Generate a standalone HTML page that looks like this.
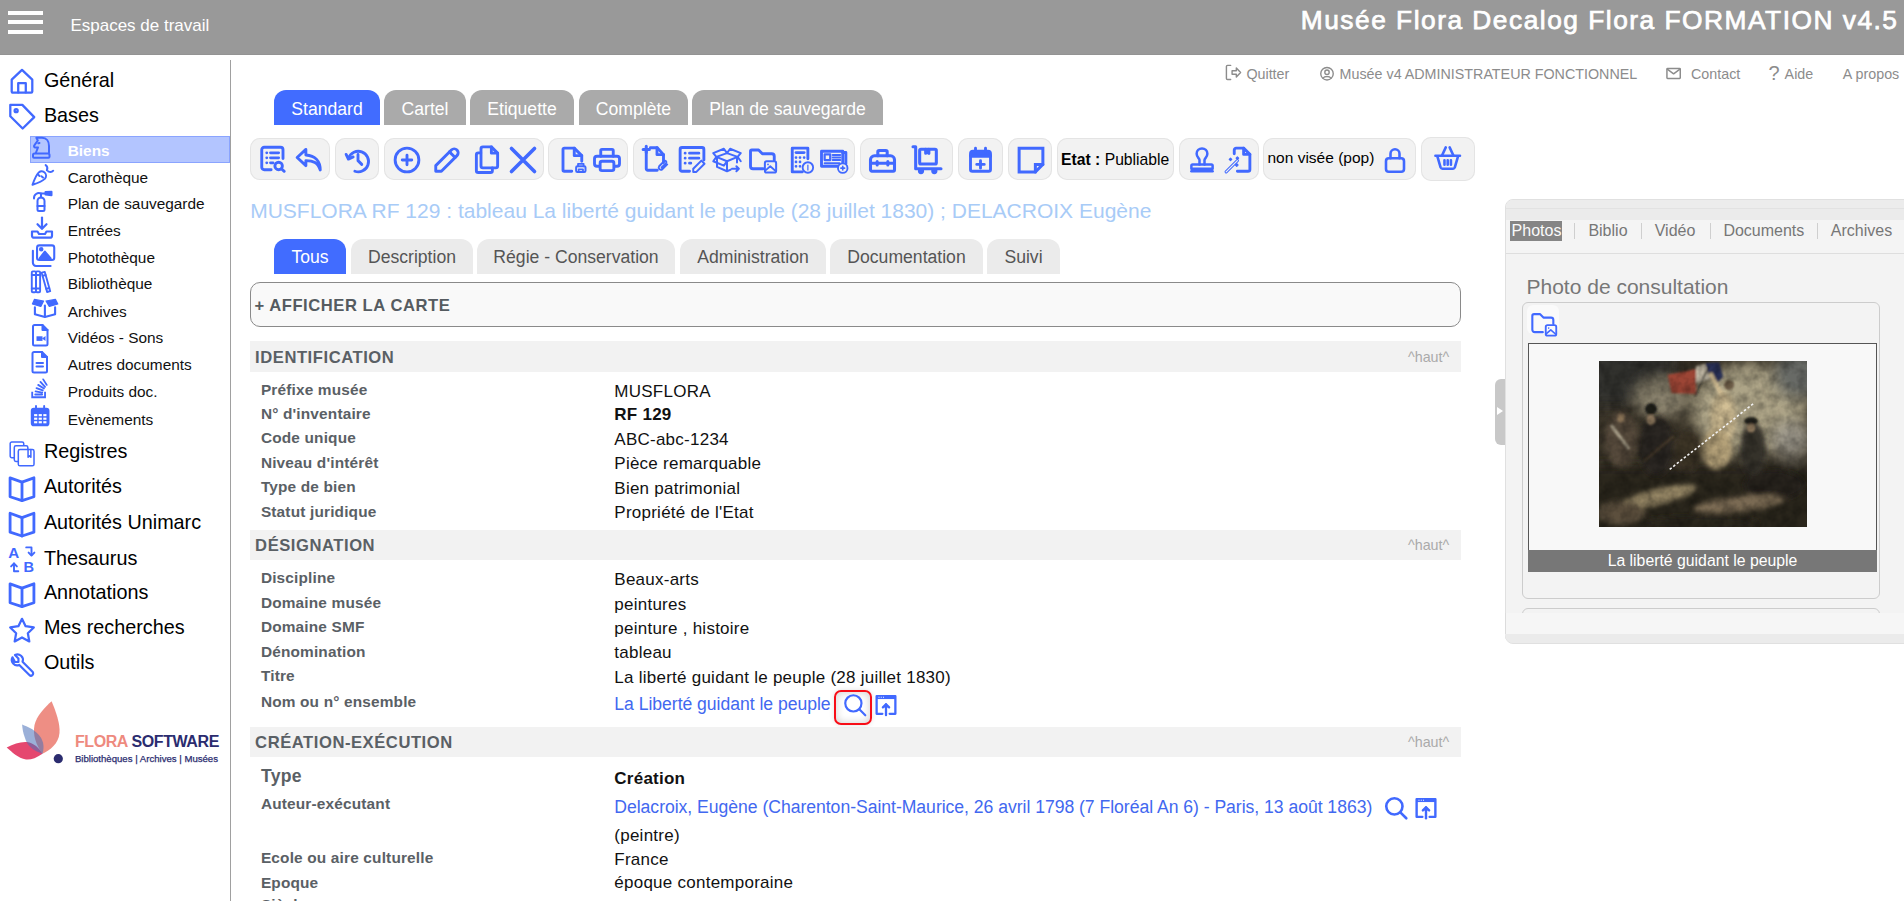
<!DOCTYPE html>
<html><head><meta charset="utf-8"><title>Flora</title>
<style>
html,body{margin:0;padding:0;width:1904px;height:901px;overflow:hidden;background:#fff;}
body{position:relative;font-family:"Liberation Sans",sans-serif;}
.t{position:absolute;line-height:1;white-space:nowrap;}
.i{position:absolute;overflow:visible;}
</style></head><body>
<div style="position:absolute;left:0px;top:0px;width:1904px;height:55px;background:#999999;box-shadow:inset 0 -1px 0 #939393"></div><div style="position:absolute;left:8px;top:10.5px;width:35px;height:4.3px;background:#fff"></div><div style="position:absolute;left:8px;top:20.2px;width:35px;height:4.3px;background:#fff"></div><div style="position:absolute;left:8px;top:30px;width:35px;height:4.3px;background:#fff"></div><div class="t" style="left:70.4px;top:17.0px;font-size:17px;color:#fff;font-weight:normal;">Espaces de travail</div><div class="t" style="right:5.5px;top:7.1px;font-size:26.3px;color:#fff;letter-spacing:1.51px;-webkit-text-stroke:0.75px #fff">Musée Flora Decalog Flora FORMATION v4.5</div><div style="position:absolute;left:230px;top:60px;width:1px;height:841px;background:#a0a0a0"></div><div class="t" style="left:43.9px;top:70.6px;font-size:19.8px;color:#000;font-weight:normal;">Général</div><div class="t" style="left:43.9px;top:106.0px;font-size:19.8px;color:#000;font-weight:normal;">Bases</div><div class="t" style="left:43.9px;top:442.3px;font-size:19.8px;color:#000;font-weight:normal;">Registres</div><div class="t" style="left:43.9px;top:477.1px;font-size:19.8px;color:#000;font-weight:normal;">Autorités</div><div class="t" style="left:43.9px;top:512.6px;font-size:19.8px;color:#000;font-weight:normal;">Autorités Unimarc</div><div class="t" style="left:43.9px;top:548.5px;font-size:19.8px;color:#000;font-weight:normal;">Thesaurus</div><div class="t" style="left:43.9px;top:583.2px;font-size:19.8px;color:#000;font-weight:normal;">Annotations</div><div class="t" style="left:43.9px;top:618.3px;font-size:19.8px;color:#000;font-weight:normal;">Mes recherches</div><div class="t" style="left:43.9px;top:653.0px;font-size:19.8px;color:#000;font-weight:normal;">Outils</div><div style="position:absolute;left:30px;top:136px;width:200px;height:27px;background:#b3c5ff;box-shadow:inset 0 0 0 1px #8aa4ff"></div><div class="t" style="left:67.7px;top:142.8px;font-size:15.4px;color:#fff;font-weight:bold;">Biens</div><div class="t" style="left:67.7px;top:170.3px;font-size:15.4px;color:#111;font-weight:normal;">Carothèque</div><div class="t" style="left:67.7px;top:196.1px;font-size:15.4px;color:#111;font-weight:normal;">Plan de sauvegarde</div><div class="t" style="left:67.7px;top:222.7px;font-size:15.4px;color:#111;font-weight:normal;">Entrées</div><div class="t" style="left:67.7px;top:249.5px;font-size:15.4px;color:#111;font-weight:normal;">Photothèque</div><div class="t" style="left:67.7px;top:276.1px;font-size:15.4px;color:#111;font-weight:normal;">Bibliothèque</div><div class="t" style="left:67.7px;top:303.6px;font-size:15.4px;color:#111;font-weight:normal;">Archives</div><div class="t" style="left:67.7px;top:330.2px;font-size:15.4px;color:#111;font-weight:normal;">Vidéos - Sons</div><div class="t" style="left:67.7px;top:357.4px;font-size:15.4px;color:#111;font-weight:normal;">Autres documents</div><div class="t" style="left:67.7px;top:384.3px;font-size:15.4px;color:#111;font-weight:normal;">Produits doc.</div><div class="t" style="left:67.7px;top:411.5px;font-size:15.4px;color:#111;font-weight:normal;">Evènements</div><div class="t" style="left:1246.4px;top:67.2px;font-size:14.3px;color:#8c8c8c;font-weight:normal;">Quitter</div><div class="t" style="left:1339.6px;top:67.2px;font-size:14.3px;color:#8c8c8c;font-weight:normal;">Musée v4 ADMINISTRATEUR FONCTIONNEL</div><div class="t" style="left:1691.0px;top:66.9px;font-size:14.3px;color:#8c8c8c;font-weight:normal;">Contact</div><div class="t" style="left:1784.6px;top:66.9px;font-size:14.3px;color:#8c8c8c;font-weight:normal;">Aide</div><div class="t" style="left:1842.8px;top:66.9px;font-size:14.3px;color:#8c8c8c;font-weight:normal;">A propos</div><div class="t" style="left:274px;top:90px;width:106px;height:35px;background:#416cff;border-radius:12px 12px 0 0;color:#fff;font-size:17.6px;text-align:center;line-height:35px;box-sizing:border-box;padding-top:1.5px">Standard</div><div class="t" style="left:384px;top:90px;width:82px;height:35px;background:#aaaaaa;border-radius:12px 12px 0 0;color:#fff;font-size:17.6px;text-align:center;line-height:35px;box-sizing:border-box;padding-top:1.5px">Cartel</div><div class="t" style="left:470px;top:90px;width:104px;height:35px;background:#aaaaaa;border-radius:12px 12px 0 0;color:#fff;font-size:17.6px;text-align:center;line-height:35px;box-sizing:border-box;padding-top:1.5px">Etiquette</div><div class="t" style="left:579px;top:90px;width:109px;height:35px;background:#aaaaaa;border-radius:12px 12px 0 0;color:#fff;font-size:17.6px;text-align:center;line-height:35px;box-sizing:border-box;padding-top:1.5px">Complète</div><div class="t" style="left:692px;top:90px;width:191px;height:35px;background:#aaaaaa;border-radius:12px 12px 0 0;color:#fff;font-size:17.6px;text-align:center;line-height:35px;box-sizing:border-box;padding-top:1.5px">Plan de sauvegarde</div><div style="position:absolute;left:250px;top:138px;width:80px;height:42px;background:#f2f2f2;border-radius:10px;box-shadow:inset 0 0 0 1px #e4e4e4"></div><div style="position:absolute;left:335px;top:138px;width:44px;height:42px;background:#f2f2f2;border-radius:10px;box-shadow:inset 0 0 0 1px #e4e4e4"></div><div style="position:absolute;left:384px;top:138px;width:160px;height:42px;background:#f2f2f2;border-radius:10px;box-shadow:inset 0 0 0 1px #e4e4e4"></div><div style="position:absolute;left:548px;top:138px;width:80px;height:42px;background:#f2f2f2;border-radius:10px;box-shadow:inset 0 0 0 1px #e4e4e4"></div><div style="position:absolute;left:633px;top:138px;width:222px;height:42px;background:#f2f2f2;border-radius:10px;box-shadow:inset 0 0 0 1px #e4e4e4"></div><div style="position:absolute;left:860px;top:138px;width:93px;height:42px;background:#f2f2f2;border-radius:10px;box-shadow:inset 0 0 0 1px #e4e4e4"></div><div style="position:absolute;left:958px;top:138px;width:45px;height:42px;background:#f2f2f2;border-radius:10px;box-shadow:inset 0 0 0 1px #e4e4e4"></div><div style="position:absolute;left:1008px;top:138px;width:44px;height:42px;background:#f2f2f2;border-radius:10px;box-shadow:inset 0 0 0 1px #e4e4e4"></div><div style="position:absolute;left:1057px;top:138px;width:117px;height:42px;background:#f2f2f2;border-radius:10px;box-shadow:inset 0 0 0 1px #e4e4e4"></div><div style="position:absolute;left:1179px;top:138px;width:80px;height:42px;background:#f2f2f2;border-radius:10px;box-shadow:inset 0 0 0 1px #e4e4e4"></div><div style="position:absolute;left:1263px;top:138px;width:153px;height:42px;background:#f2f2f2;border-radius:10px;box-shadow:inset 0 0 0 1px #e4e4e4"></div><div style="position:absolute;left:1421px;top:137px;width:54px;height:44px;background:#f2f2f2;border-radius:10px;box-shadow:inset 0 0 0 1px #e4e4e4"></div><div class="t" style="left:1061.1px;top:152.2px;font-size:15.7px;color:#000;font-weight:normal;"><b>Etat :</b> Publiable</div><div class="t" style="left:1267.5px;top:149.8px;font-size:15.5px;color:#000;font-weight:normal;">non visée (pop)</div><div class="t" style="left:250.2px;top:200.0px;font-size:21px;color:#a8cbf7;font-weight:normal;">MUSFLORA RF 129 : tableau La liberté guidant le peuple (28 juillet 1830) ; DELACROIX Eugène</div><div class="t" style="left:274px;top:239px;width:72px;height:35px;background:#416cff;border-radius:12px 12px 0 0;color:#fff;font-size:17.6px;text-align:center;line-height:35px;box-sizing:border-box;padding-top:0.8px">Tous</div><div class="t" style="left:351px;top:239px;width:122px;height:35px;background:#ebebeb;border-radius:12px 12px 0 0;color:#555;font-size:17.6px;text-align:center;line-height:35px;box-sizing:border-box;padding-top:0.8px">Description</div><div class="t" style="left:477px;top:239px;width:198px;height:35px;background:#ebebeb;border-radius:12px 12px 0 0;color:#555;font-size:17.6px;text-align:center;line-height:35px;box-sizing:border-box;padding-top:0.8px">Régie - Conservation</div><div class="t" style="left:680px;top:239px;width:146px;height:35px;background:#ebebeb;border-radius:12px 12px 0 0;color:#555;font-size:17.6px;text-align:center;line-height:35px;box-sizing:border-box;padding-top:0.8px">Administration</div><div class="t" style="left:830px;top:239px;width:153px;height:35px;background:#ebebeb;border-radius:12px 12px 0 0;color:#555;font-size:17.6px;text-align:center;line-height:35px;box-sizing:border-box;padding-top:0.8px">Documentation</div><div class="t" style="left:987px;top:239px;width:73px;height:35px;background:#ebebeb;border-radius:12px 12px 0 0;color:#555;font-size:17.6px;text-align:center;line-height:35px;box-sizing:border-box;padding-top:0.8px">Suivi</div><div style="position:absolute;left:250px;top:282px;width:1209px;height:43px;border:1px solid #8a8a8a;border-radius:10px;background:#f9f9f9"></div><div class="t" style="left:254.4px;top:298.1px;font-size:16.6px;color:#555b60;font-weight:bold;letter-spacing:0.55px">+ AFFICHER LA CARTE</div><div style="position:absolute;left:250px;top:341px;width:1211px;height:31px;background:#f2f2f2"></div><div class="t" style="left:255.1px;top:350.2px;font-size:16.6px;color:#5a6065;font-weight:bold;letter-spacing:0.55px">IDENTIFICATION</div><div class="t" style="left:1408.0px;top:349.7px;font-size:14.3px;color:#aaa;font-weight:normal;">^haut^</div><div class="t" style="left:260.9px;top:381.6px;font-size:15.4px;color:#5a6065;font-weight:bold;letter-spacing:0.17px">Préfixe musée</div><div class="t" style="left:614.3px;top:382.9px;font-size:17px;color:#111;font-weight:normal;letter-spacing:0.25px">MUSFLORA</div><div class="t" style="left:260.9px;top:406.0px;font-size:15.4px;color:#5a6065;font-weight:bold;letter-spacing:0.17px">N° d'inventaire</div><div class="t" style="left:614.3px;top:406.4px;font-size:17px;color:#111;font-weight:bold;letter-spacing:0.25px">RF 129</div><div class="t" style="left:260.9px;top:430.0px;font-size:15.4px;color:#5a6065;font-weight:bold;letter-spacing:0.17px">Code unique</div><div class="t" style="left:614.3px;top:430.9px;font-size:17px;color:#111;font-weight:normal;letter-spacing:0.25px">ABC-abc-1234</div><div class="t" style="left:260.9px;top:454.5px;font-size:15.4px;color:#5a6065;font-weight:bold;letter-spacing:0.17px">Niveau d'intérêt</div><div class="t" style="left:614.3px;top:455.1px;font-size:17px;color:#111;font-weight:normal;letter-spacing:0.25px">Pièce remarquable</div><div class="t" style="left:260.9px;top:479.0px;font-size:15.4px;color:#5a6065;font-weight:bold;letter-spacing:0.17px">Type de bien</div><div class="t" style="left:614.3px;top:480.0px;font-size:17px;color:#111;font-weight:normal;letter-spacing:0.25px">Bien patrimonial</div><div class="t" style="left:260.9px;top:503.5px;font-size:15.4px;color:#5a6065;font-weight:bold;letter-spacing:0.17px">Statut juridique</div><div class="t" style="left:614.3px;top:504.2px;font-size:17px;color:#111;font-weight:normal;letter-spacing:0.25px">Propriété de l'Etat</div><div style="position:absolute;left:250px;top:530px;width:1211px;height:30px;background:#f2f2f2"></div><div class="t" style="left:255.1px;top:538.2px;font-size:16.6px;color:#5a6065;font-weight:bold;letter-spacing:0.55px">DÉSIGNATION</div><div class="t" style="left:1408.0px;top:537.7px;font-size:14.3px;color:#aaa;font-weight:normal;">^haut^</div><div class="t" style="left:260.9px;top:570.4px;font-size:15.4px;color:#5a6065;font-weight:bold;letter-spacing:0.17px">Discipline</div><div class="t" style="left:614.3px;top:571.4px;font-size:17px;color:#111;font-weight:normal;letter-spacing:0.25px">Beaux-arts</div><div class="t" style="left:260.9px;top:595.0px;font-size:15.4px;color:#5a6065;font-weight:bold;letter-spacing:0.17px">Domaine musée</div><div class="t" style="left:614.3px;top:596.0px;font-size:17px;color:#111;font-weight:normal;letter-spacing:0.25px">peintures</div><div class="t" style="left:260.9px;top:619.0px;font-size:15.4px;color:#5a6065;font-weight:bold;letter-spacing:0.17px">Domaine SMF</div><div class="t" style="left:614.3px;top:619.8px;font-size:17px;color:#111;font-weight:normal;letter-spacing:0.25px">peinture , histoire</div><div class="t" style="left:260.9px;top:643.5px;font-size:15.4px;color:#5a6065;font-weight:bold;letter-spacing:0.17px">Dénomination</div><div class="t" style="left:614.3px;top:644.4px;font-size:17px;color:#111;font-weight:normal;letter-spacing:0.25px">tableau</div><div class="t" style="left:260.9px;top:668.0px;font-size:15.4px;color:#5a6065;font-weight:bold;letter-spacing:0.17px">Titre</div><div class="t" style="left:614.3px;top:668.6px;font-size:17px;color:#111;font-weight:normal;letter-spacing:0.25px">La liberté guidant le peuple (28 juillet 1830)</div><div class="t" style="left:260.9px;top:693.7px;font-size:15.4px;color:#5a6065;font-weight:bold;letter-spacing:0.17px">Nom ou n° ensemble</div><div class="t" style="left:614.3px;top:695.8px;font-size:17.6px;color:#4268f0;font-weight:normal;letter-spacing:-0.03px">La Liberté guidant le peuple</div><div style="position:absolute;left:250px;top:727px;width:1211px;height:30px;background:#f2f2f2"></div><div class="t" style="left:255.1px;top:735.4px;font-size:16.6px;color:#5a6065;font-weight:bold;letter-spacing:0.55px">CRÉATION-EXÉCUTION</div><div class="t" style="left:1408.0px;top:734.9px;font-size:14.3px;color:#aaa;font-weight:normal;">^haut^</div><div class="t" style="left:260.9px;top:768.1px;font-size:17.6px;color:#5a6065;font-weight:bold;letter-spacing:0.3px">Type</div><div class="t" style="left:260.9px;top:770.0px;font-size:15.4px;color:#5a6065;font-weight:bold;letter-spacing:0.17px"></div><div class="t" style="left:614.3px;top:769.8px;font-size:17px;color:#111;font-weight:bold;letter-spacing:0.25px">Création</div><div class="t" style="left:260.9px;top:795.9px;font-size:15.4px;color:#5a6065;font-weight:bold;letter-spacing:0.17px">Auteur-exécutant</div><div class="t" style="left:614.3px;top:798.5px;font-size:17.6px;color:#4268f0;font-weight:normal;letter-spacing:-0.03px">Delacroix, Eugène (Charenton-Saint-Maurice, 26 avril 1798 (7 Floréal An 6) - Paris, 13 août 1863)</div><div class="t" style="left:614.3px;top:826.7px;font-size:17px;color:#111;font-weight:normal;letter-spacing:0.25px">(peintre)</div><div class="t" style="left:260.9px;top:849.6px;font-size:15.4px;color:#5a6065;font-weight:bold;letter-spacing:0.17px">Ecole ou aire culturelle</div><div class="t" style="left:614.3px;top:850.5px;font-size:17px;color:#111;font-weight:normal;letter-spacing:0.25px">France</div><div class="t" style="left:260.9px;top:874.5px;font-size:15.4px;color:#5a6065;font-weight:bold;letter-spacing:0.17px">Epoque</div><div class="t" style="left:614.3px;top:874.3px;font-size:17px;color:#111;font-weight:normal;letter-spacing:0.25px">époque contemporaine</div><div class="t" style="left:260.9px;top:897.0px;font-size:15.4px;color:#5a6065;font-weight:bold;letter-spacing:0.17px">Siècle</div><div style="position:absolute;left:1505px;top:199px;width:420px;height:443px;border:1px solid #e0e0e0;border-radius:8px;background:#f3f3f3;overflow:hidden"><div style="position:absolute;left:0;top:0;width:100%;height:8px;background:#ececec;border-bottom:1px solid #e2e2e2"></div><div style="position:absolute;left:0;top:9px;width:100%;height:11px;background:#ebebeb"></div><div style="position:absolute;left:0;top:20px;width:100%;height:33px;background:#f4f4f4;border-bottom:1px solid #dedede"></div><div style="position:absolute;left:0;top:413px;width:100%;height:21px;background:#f6f6f6;border-top:1px solid #e0e0e0"></div><div style="position:absolute;left:0;top:435px;width:100%;height:10px;background:#ebebeb"></div></div><div style="position:absolute;left:1510px;top:221px;width:52px;height:20px;background:#858585"></div><div class="t" style="left:1511.6px;top:222.5px;font-size:16px;color:#fafafa;font-weight:normal;">Photos</div><div style="position:absolute;left:1574px;top:223px;width:1px;height:16px;background:#cfcfcf"></div><div style="position:absolute;left:1641px;top:223px;width:1px;height:16px;background:#cfcfcf"></div><div style="position:absolute;left:1710px;top:223px;width:1px;height:16px;background:#cfcfcf"></div><div style="position:absolute;left:1817px;top:223px;width:1px;height:16px;background:#cfcfcf"></div><div class="t" style="left:1588.4px;top:222.5px;font-size:16px;color:#777;font-weight:normal;">Biblio</div><div class="t" style="left:1654.7px;top:222.5px;font-size:16px;color:#777;font-weight:normal;">Vidéo</div><div class="t" style="left:1723.4px;top:222.5px;font-size:16px;color:#777;font-weight:normal;">Documents</div><div class="t" style="left:1830.8px;top:222.5px;font-size:16px;color:#777;font-weight:normal;">Archives</div><div class="t" style="left:1526.5px;top:276.2px;font-size:21px;color:#777;font-weight:normal;">Photo de consultation</div><div style="position:absolute;left:1522px;top:302px;width:356px;height:295px;border:1px solid #cccccc;border-radius:6px;background:#f3f3f3"></div><div style="position:absolute;left:1522px;top:608px;width:356px;height:20px;border:1px solid #cccccc;border-radius:6px;background:#f3f3f3"></div><div style="position:absolute;left:1505px;top:613px;width:399px;height:30px;background:#f6f6f6;border-radius:0 0 0 8px;border-left:1px solid #dcdcdc;border-bottom:1px solid #dcdcdc;box-sizing:border-box"></div><div style="position:absolute;left:1505px;top:634px;width:399px;height:9px;background:#ebebeb;border-radius:0 0 0 8px"></div><div style="position:absolute;left:1527px;top:305px;width:32px;height:29px;background:#fafafa;border-radius:6px"></div><div style="position:absolute;left:1528px;top:343px;width:347px;height:227px;border:1px solid #555;background:#f8f8f8"></div><div style="position:absolute;left:1528px;top:550px;width:349px;height:22px;background:#777"></div><div class="t" style="left:1528px;top:550px;width:349px;height:22px;line-height:22px;text-align:center;color:#fff;font-size:15.8px">La liberté guidant le peuple</div><div style="position:absolute;left:1599px;top:361px;width:208px;height:166px;background:#4a4536"></div><div style="position:absolute;left:1495px;top:379px;width:10px;height:66px;background:#c8c8c8;border-radius:6px 0 0 6px"></div><div style="position:absolute;left:1497px;top:407px;width:0;height:0;border-left:6px solid #fff;border-top:4.5px solid transparent;border-bottom:4.5px solid transparent"></div><div style="position:absolute;left:834px;top:690px;width:34px;height:31px;border:2px solid #f80d17;border-radius:7px;box-shadow:0 0 5px rgba(0,0,0,0.12),inset 0 0 8px rgba(0,0,0,0.2)"></div><svg style="position:absolute;left:0;top:690px" width="70" height="80" viewBox="0 690 70 80"><path d="M51.6 701.2C56 712 60.2 723 59.5 733C58.5 744 50 750 42.5 753.7C36 745 32.5 735 34.5 725C36.5 716 45 707 51.6 701.2Z" fill="#ee8e84"/><path d="M6.7 747.5C14 744 20 741.5 27 742C34 743 39 748 42.5 753.7C36 758 31 760 26 759.5C18 758 12 752 6.7 747.5Z" fill="#e5476f"/><path d="M22.1 724.6C28 727 33 729 38 734C43 739 45 746 42.5 753.7C34 751 27 746 25 738C23 733 22.5 729 22.1 724.6Z" fill="rgb(73,111,184)" fill-opacity="0.55"/><circle cx="58.3" cy="758.7" r="4.6" fill="#2b2c6f"/></svg><div class="t" style="left:74.9px;top:733.6px;font-size:16px;color:#2b2c6f;font-weight:bold;letter-spacing:-0.4px"><span style="color:#ee8a7e">FLORA</span> SOFTWARE</div><div class="t" style="left:74.9px;top:753.5px;font-size:9.6px;color:#2b2c6f;font-weight:normal;-webkit-text-stroke:0.25px #2b2c6f">Bibliothèques | Archives | Musées</div><svg style="position:absolute;left:1599px;top:361px" width="208" height="166" viewBox="0 0 208 166"><defs><filter id="bl" x="-30%" y="-30%" width="160%" height="160%"><feGaussianBlur stdDeviation="7"/></filter><filter id="bm" x="-30%" y="-30%" width="160%" height="160%"><feGaussianBlur stdDeviation="2.6"/></filter><filter id="bs" x="-30%" y="-30%" width="160%" height="160%"><feGaussianBlur stdDeviation="0.8"/></filter><filter id="tx" x="0" y="0" width="100%" height="100%"><feTurbulence type="fractalNoise" baseFrequency="0.09" numOctaves="3" seed="7"/><feColorMatrix type="matrix" values="0 0 0 0 0  0 0 0 0 0  0 0 0 0 0  0 0 0 -1.6 1.1"/></filter><clipPath id="pc"><rect width="208" height="166"/></clipPath></defs><g clip-path="url(#pc)"><rect width="208" height="166" fill="#3b3529"/><g filter="url(#bl)"><rect x="-10" y="-10" width="85" height="55" fill="#30322f"/><ellipse cx="62" cy="38" rx="26" ry="20" fill="#8d8570"/><ellipse cx="150" cy="48" rx="58" ry="46" fill="#ada487"/><ellipse cx="198" cy="14" rx="24" ry="24" fill="#686b66"/><ellipse cx="192" cy="78" rx="20" ry="18" fill="#9c978a"/><rect x="-10" y="104" width="230" height="80" fill="#2c271f"/></g><g filter="url(#bm)"><ellipse cx="22" cy="78" rx="17" ry="28" fill="#55493a"/><ellipse cx="57" cy="85" rx="18" ry="30" fill="#2a2620"/><ellipse cx="88" cy="90" rx="14" ry="20" fill="#3d3428"/><ellipse cx="124" cy="58" rx="13" ry="28" fill="#d2bf95"/><ellipse cx="118" cy="88" rx="15" ry="20" fill="#b3a078"/><ellipse cx="154" cy="88" rx="13" ry="26" fill="#35322c"/><ellipse cx="175" cy="124" rx="30" ry="15" fill="#28241e"/><ellipse cx="58" cy="136" rx="40" ry="8" fill="#9a8a68" transform="rotate(-14 58 136)"/><ellipse cx="140" cy="143" rx="46" ry="8" fill="#7a6b52" transform="rotate(-6 140 143)"/><ellipse cx="22" cy="152" rx="24" ry="12" fill="#5c503d"/><ellipse cx="100" cy="162" rx="60" ry="7" fill="#2b261f"/></g><g filter="url(#bs)"><path d="M68.7 13.8L97.4 8 96.5 32.8 72.6 31.9z" fill="#9c4535"/><path d="M97 5L106 3 111 18 97 22z" fill="#c9c0ac"/><path d="M106 2.3L120 1.3 124 15.7 118.4 21.4 111 17.6z" fill="#2b325a"/><path d="M96 35L110 5" stroke="#1e1c18" stroke-width="1.3"/><path d="M111 12L125 38" stroke="#cdb990" stroke-width="4.5"/><ellipse cx="130" cy="24" rx="5" ry="5" fill="#6a5a44"/><ellipse cx="52" cy="48" rx="6" ry="6" fill="#1b1a18"/><ellipse cx="52" cy="59" rx="4.5" ry="5" fill="#9a8366"/><ellipse cx="152" cy="60" rx="7" ry="4" fill="#24231f"/><ellipse cx="152" cy="67" rx="4" ry="4.5" fill="#9c8466"/><ellipse cx="22" cy="57" rx="4" ry="4.5" fill="#8c7458"/><path d="M12 64L30 88" stroke="#aea48e" stroke-width="3"/><path d="M45 100L75 75" stroke="#4a3c2c" stroke-width="2"/></g><rect width="208" height="166" fill="#1a1610" filter="url(#tx)" opacity="0.35"/><path d="M70.7 108.3L154.7 42.4" stroke="#f2f2f2" stroke-width="1.6" stroke-dasharray="2.5 2"/></g></svg><div class="t" style="left:8.3px;top:544.8px;font-size:15.2px;color:#4169ff;font-weight:bold;">A</div><div class="t" style="left:23.5px;top:559.8px;font-size:14.6px;color:#4169ff;font-weight:bold;">B</div><svg style="position:absolute;left:0;top:0;pointer-events:none" width="1904" height="901" viewBox="0 0 1904 901"><g transform="translate(9.00,68.60) scale(1.0833)" fill="none" stroke="#4169ff" stroke-width="2.1" stroke-linecap="round" stroke-linejoin="round"><path d="M2.5 10.2L12 1.2l9.5 9V21.2a1 1 0 0 1-1 1H3.5a1 1 0 0 1-1-1z"/><path d="M8.5 22V13.5h7V22"/></g><g transform="translate(9.00,103.60) scale(1.0833)" fill="none" stroke="#4169ff" stroke-width="2.1" stroke-linecap="round" stroke-linejoin="round"><path d="M1.2 1.2H12.3L23.3 12.5 12.6 23 1.2 11.7z"/><circle cx="6.6" cy="6.5" r="1.4"/></g><g transform="translate(9.10,440.90) scale(1.0833)" fill="none" stroke="#4169ff" stroke-width="1.4" stroke-linecap="round" stroke-linejoin="round"><rect x="1" y="1" width="12.5" height="14.5" rx="1.5"/><rect x="4.8" y="4.5" width="12.5" height="14.5" rx="1.5" fill="#fff"/><rect x="8.5" y="8" width="14.5" height="15" rx="1.5" fill="#fff"/><path d="M17.5 8v7l1.3-1.2 1.3 1.2V8"/></g><g transform="translate(9.00,476.20) scale(1.0833)" fill="none" stroke="#4169ff" stroke-width="2.6" stroke-linecap="round" stroke-linejoin="round"><path d="M1 1.5L12 5.5 23 1.5V19L12 22.5 1 19z"/><path d="M12 5.5V22.5"/></g><g transform="translate(9.00,511.60) scale(1.0833)" fill="none" stroke="#4169ff" stroke-width="2.6" stroke-linecap="round" stroke-linejoin="round"><path d="M1 1.5L12 5.5 23 1.5V19L12 22.5 1 19z"/><path d="M12 5.5V22.5"/></g><g transform="translate(9.00,582.20) scale(1.0833)" fill="none" stroke="#4169ff" stroke-width="2.6" stroke-linecap="round" stroke-linejoin="round"><path d="M1 1.5L12 5.5 23 1.5V19L12 22.5 1 19z"/><path d="M12 5.5V22.5"/></g><g fill="none" stroke="#4169ff" stroke-width="1.9" stroke-linecap="round" stroke-linejoin="round"><path d="M26.2 547.4H31.5V555"/><path d="M28.6 552.6l2.9 2.9 2.9-2.9"/><path d="M18.3 571.3H14V563.5"/><path d="M11.1 566.4l2.9-2.9 2.9 2.9"/></g><g transform="translate(8.50,617.00) scale(1.1250)" fill="none" stroke="#4169ff" stroke-width="2.0" stroke-linecap="round" stroke-linejoin="round"><path d="M12 18.2l-6.5 3.5 1.3-7.3L1.5 9.3l7.3-1.1L12 1.6l3.2 6.6 7.3 1.1-5.3 5.1 1.3 7.3z"/></g><g transform="translate(9.00,652.00) scale(1.0833)" fill="none" stroke="#4169ff" stroke-width="2.0" stroke-linecap="round" stroke-linejoin="round"><path d="M5.5 9.2h3.2V6L5.5 2.8a5 5 0 0 1 7 6.2l9.2 9.3a2 2 0 0 1-2.9 2.9L9.5 11.9a5 5 0 0 1-6.3-7z"/></g><g transform="translate(29.50,136.00) scale(1.0000)" fill="none" stroke="#4169ff" stroke-width="2.0" stroke-linecap="round" stroke-linejoin="round"><path d="M6.5 16.5L8.5 11.5H5.8a1.3 1.3 0 0 1-1-2.1L8.3 4.5 6.8 1.8H12.5c4.5 0 7 3.3 7 8.2v6.5"/><path d="M5.5 17.5h13a1.5 1.5 0 0 1 1.5 1.5v1.8a1 1 0 0 1-1 1H4.5a1 1 0 0 1-1-1V19a1.5 1.5 0 0 1 1.5-1.5z"/><path d="M8.8 7.3l1.2-.3"/></g><g transform="translate(30.00,163.00) scale(1.0000)" fill="none" stroke="#4169ff" stroke-width="2.0" stroke-linecap="round" stroke-linejoin="round"><path d="M2.5 21.8s9.5-3.2 12.5-6.2a4.4 4.4 0 0 0-6.2-6.2C5.8 12.3 2.5 21.8 2.5 21.8z"/><path d="M9.5 13l-1.5-1.5"/><path d="M13 14.5l-1.6-1.3"/><path d="M15.6 2c1.6 1.2 2.1 3.4 1.3 5.3"/><path d="M18.2 8.4c1.8 .9 3.8 .8 5-.7"/></g><g transform="translate(30.00,189.50) scale(1.0000)" fill="none" stroke="#4169ff" stroke-width="2.0" stroke-linecap="round" stroke-linejoin="round"><path d="M11 8a3.5 3.5 0 0 1 3.5 3.5V20a1.5 1.5 0 0 1-1.5 1.5H9A1.5 1.5 0 0 1 7.5 20V11.5A3.5 3.5 0 0 1 11 8z"/><path d="M7.5 16.5h7"/><path d="M11 8V4"/><path d="M4 9a5 5 0 0 1 7-5h5" /><path d="M15.5 2.5l6 -.3v3.6l-6-.8z" fill="#4169ff"/></g><g transform="translate(30.00,216.00) scale(1.0000)" fill="none" stroke="#4169ff" stroke-width="2.2" stroke-linecap="round" stroke-linejoin="round"><path d="M12 1.5V12.5"/><path d="M7.5 8.2L12 12.7l4.5-4.5"/><path d="M2 15.5h5.5l1.5 2.5h6l1.5-2.5H22v4.2a2 2 0 0 1-2 2H4a2 2 0 0 1-2-2z"/></g><g transform="translate(30.80,244.30) scale(1.0417)" fill="none" stroke="#4169ff" stroke-width="2.0" stroke-linecap="round" stroke-linejoin="round"><rect x="6" y="1" width="16.5" height="14" rx="2.2"/><path d="M2 6.2V17.8a3 3 0 0 0 3 3H19"/><path d="M8.5 13.5l5-6.5 5.5 6.5z" fill="#4169ff"/><circle cx="10" cy="4.8" r="1.2" fill="#4169ff"/></g><g transform="translate(29.70,269.80) scale(1.0417)" fill="none" stroke="#4169ff" stroke-width="1.8" stroke-linecap="round" stroke-linejoin="round"><rect x="2" y="1.5" width="4" height="20" rx="1"/><rect x="6" y="1.5" width="4" height="20" rx="1"/><path d="M11.5 2.8l3-.8 5.2 18.5-3 .8z"/><path d="M2 5h8M2 18h8M12.3 5.8l3-.8M15.8 18.3l3-.8"/></g><g fill="#4169ff" stroke="#4169ff" stroke-width="1.2" stroke-linejoin="round"><path d="M34.4 299.4L43.6 301 40.8 306.4 32.4 304z"/><path d="M46 301L55.4 299.4 57.8 304 49.3 306.4z"/></g><g fill="none" stroke="#4169ff" stroke-width="2.1" stroke-linecap="round" stroke-linejoin="round"><path d="M34.9 307.4V314.2L44.9 317 55.1 314.2V307.4"/><path d="M44.9 305.5V316.6"/></g><g transform="translate(29.00,323.50) scale(1.0000)" fill="none" stroke="#4169ff" stroke-width="2.0" stroke-linecap="round" stroke-linejoin="round"><path d="M5.5 1.5h8l5 5v14a1.5 1.5 0 0 1-1.5 1.5H5.5A1.5 1.5 0 0 1 4 20.5v-17.5a1.5 1.5 0 0 1 1.5-1.5z"/><path d="M13.5 1.5v5h5" fill="#4169ff"/><rect x="7.5" y="12.8" width="6" height="4.6" fill="#4169ff" stroke="none"/><path d="M13 15l3.5-2.5v5z" fill="#4169ff" stroke="none"/></g><g transform="translate(28.50,350.50) scale(1.0000)" fill="none" stroke="#4169ff" stroke-width="2.0" stroke-linecap="round" stroke-linejoin="round"><path d="M5.5 1.5h8l5 5v14a1.5 1.5 0 0 1-1.5 1.5H5.5A1.5 1.5 0 0 1 4 20.5v-17.5a1.5 1.5 0 0 1 1.5-1.5z"/><path d="M13.5 1.5v5h5" fill="#4169ff"/><path d="M8 12.5h6.5M8 16h6.5"/></g><g transform="translate(29.00,378.00) scale(0.9167)" fill="none" stroke="#4169ff" stroke-width="2.0" stroke-linecap="round" stroke-linejoin="round"><path d="M3.5 15v6h14v-6" stroke-linecap="butt" stroke-linejoin="miter"/><path d="M6.8 18h7.5M7.2 14.6l7.2 1.3M8.2 11l6.8 2.6M10 7.5l6.3 4M12.5 4.2l5 5.5M15.5 1.5l3.8 6"/></g><g transform="translate(29.30,405.00) scale(0.9583)" fill="none" stroke="#4169ff" stroke-width="1.5" stroke-linecap="round" stroke-linejoin="round"><rect x="2.3" y="3.5" width="18" height="18" rx="2.5" fill="#4169ff"/><path d="M7 1v3M15.5 1v3" stroke-width="2"/><g fill="#fff" stroke="none"><rect x="5" y="9.5" width="3.3" height="2.2"/><rect x="9.8" y="9.5" width="3.3" height="2.2"/><rect x="14.6" y="9.5" width="3.3" height="2.2"/><rect x="5" y="13.2" width="3.3" height="2.2"/><rect x="9.8" y="13.2" width="3.3" height="2.2"/><rect x="14.6" y="13.2" width="3.3" height="2.2"/><rect x="5" y="16.9" width="3.3" height="2.2"/><rect x="9.8" y="16.9" width="3.3" height="2.2"/><rect x="14.6" y="16.9" width="3.3" height="2.2"/></g></g><g transform="translate(1225.00,64.00) scale(0.7083)" fill="none" stroke="#8c8c8c" stroke-width="2.0" stroke-linecap="round" stroke-linejoin="round"><path d="M8 2H3.5a1.5 1.5 0 0 0-1.5 1.5v17A1.5 1.5 0 0 0 3.5 22H8"/><path d="M10 9.5h6V5.5l6 6.5-6 6.5v-4h-6z"/></g><g transform="translate(1319.50,66.20) scale(0.6250)" fill="none" stroke="#8c8c8c" stroke-width="2.2" stroke-linecap="round" stroke-linejoin="round"><circle cx="12" cy="12" r="10"/><circle cx="12" cy="9.5" r="3.5"/><path d="M5.5 19a7.5 5 0 0 1 13 0"/></g><g transform="translate(1665.60,65.50) scale(0.6667)" fill="none" stroke="#8c8c8c" stroke-width="2.2" stroke-linecap="round" stroke-linejoin="round"><rect x="2" y="4.5" width="20" height="15" rx="1"/><path d="M2.5 5.5l9.5 7 9.5-7"/></g><text x="1768.5" y="79.8" font-family="Liberation Sans" font-size="20" fill="#8c8c8c">?</text><g transform="translate(258.00,144.70) scale(1.2500)" fill="none" stroke="#4169ff" stroke-width="2.3" stroke-linecap="round" stroke-linejoin="round"><path d="M10.5 20H5a2 2 0 0 1-2-2V4a2 2 0 0 1 2-2h13a2 2 0 0 1 2 2v7"/><path d="M7 6.5h.01M10 6.5h6.5M7 10.5h.01M10 10.5h6.5M7 14.5h.01M10 14.5h2"/><circle cx="16.5" cy="17" r="3"/><path d="M18.7 19.2L21 21.3"/></g><g transform="translate(294.00,145.00) scale(1.2500)" fill="none" stroke="#4169ff" stroke-width="2.3" stroke-linecap="round" stroke-linejoin="round"><path d="M9.5 3.5L2.5 10l7 6.5v-4c6 0 9.5 1.5 11.5 7.5 0-7-4-11.5-11.5-12z"/></g><g transform="translate(343.00,145.00) scale(1.2500)" fill="none" stroke="#4169ff" stroke-width="2.3" stroke-linecap="round" stroke-linejoin="round"><path d="M12 7.5v5l3 3"/><path d="M4.5 10.5a8.2 8.2 0 1 1 5 10.5"/><path d="M2.5 7.5l1.8 3.8 3.8-1.8"/></g><g transform="translate(392.00,145.00) scale(1.2500)" fill="none" stroke="#4169ff" stroke-width="2.3" stroke-linecap="round" stroke-linejoin="round"><circle cx="12" cy="12" r="9.5"/><path d="M8.2 12h7.6M12 8.2v7.6"/></g><g transform="translate(432.00,145.00) scale(1.2500)" fill="none" stroke="#4169ff" stroke-width="2.3" stroke-linecap="round" stroke-linejoin="round"><path d="M3 21h4.5L20 8.5a3 3 0 0 0-4.5-4.5L3 16.5z"/><path d="M14 5.5l4.5 4.5"/></g><g transform="translate(472.00,145.00) scale(1.2500)" fill="none" stroke="#4169ff" stroke-width="2.3" stroke-linecap="round" stroke-linejoin="round"><path d="M7 6.3H5a1.5 1.5 0 0 0-1.5 1.5v12.7A1.5 1.5 0 0 0 5 22h9.8a1.5 1.5 0 0 0 1.5-1.5V18.3"/><path d="M8.7 1.5h6.8l5 5v10.3a1.5 1.5 0 0 1-1.5 1.5H8.7a1.5 1.5 0 0 1-1.5-1.5V3a1.5 1.5 0 0 1 1.5-1.5z"/><path d="M15.5 1.5v5h5"/></g><g transform="translate(508.00,145.00) scale(1.2500)" fill="none" stroke="#4169ff" stroke-width="2.9" stroke-linecap="round" stroke-linejoin="round"><path d="M2.8 2.8l18.4 18.4M21.2 2.8L2.8 21.2"/></g><g transform="translate(558.00,145.00) scale(1.2500)" fill="none" stroke="#4169ff" stroke-width="2.3" stroke-linecap="round" stroke-linejoin="round"><path d="M11 21H5a1 1 0 0 1-1-1V3.5a1 1 0 0 1 1-1h8l6 6V13"/><path d="M13 2.5v6h6"/><rect x="14.5" y="17" width="7.5" height="4.5" rx="1" stroke-width="1.6"/><path d="M16 17v-2h4.5v2M16.5 21.5v-2h3.5v2" stroke-width="1.4"/></g><g transform="translate(592.00,145.00) scale(1.2500)" fill="none" stroke="#4169ff" stroke-width="2.3" stroke-linecap="round" stroke-linejoin="round"><path d="M6 17H4a2 2 0 0 1-2-2v-4a2 2 0 0 1 2-2h16a2 2 0 0 1 2 2v4a2 2 0 0 1-2 2h-2"/><path d="M17 9V4.5a1 1 0 0 0-1-1H8a1 1 0 0 0-1 1V9"/><rect x="6.5" y="13" width="11" height="7.5" rx="1.5"/></g><g transform="translate(641.00,145.00) scale(1.2500)" fill="none" stroke="#4169ff" stroke-width="2.3" stroke-linecap="round" stroke-linejoin="round"><path d="M4.2 4.5v14.5a1.2 1.2 0 0 0 1.2 1.2H13"/><path d="M7.5 2.2h5.5l5 5.5V14"/><path d="M12.8 2.2v5.5h5.2"/><path d="M4.2 1v5M1.7 3.5h5" stroke-width="2.4"/><path d="M21 15.5l-4 4a1.8 1.8 0 0 1-2.5-2.5l4-4a1 1 0 0 1 1.5 1.5l-3.5 3.5" stroke-width="1.5"/></g><g transform="translate(677.00,145.00) scale(1.2500)" fill="none" stroke="#4169ff" stroke-width="2.3" stroke-linecap="round" stroke-linejoin="round"><path d="M10 21H4a1.5 1.5 0 0 1-1.5-1.5V3.5A1.5 1.5 0 0 1 4 2h16a1.5 1.5 0 0 1 1.5 1.5V12"/><path d="M6.5 6.5h.01M10 6.5h7.5M6.5 10.5h.01M10 10.5h7.5M6.5 14.5h.01M10 14.5h1"/><path d="M13 21.5v-2.5l6.5-6.5 2.5 2.5-6.5 6.5z" stroke-width="1.6"/></g><g transform="translate(712.00,145.00) scale(1.2500)" fill="none" stroke="#4169ff" stroke-width="2.3" stroke-linecap="round" stroke-linejoin="round"><path d="M12 6.5L3.5 9.5l8.5 3.5 8.5-3.5z" stroke-width="1.6"/><path d="M4 9.5v8l8 3.5 3-1.3M20 9.5v4.5M12 13v8" stroke-width="1.6"/><path d="M3.5 9.5L1 6.5l8.5-3.5L12 6.5M20.5 9.5l2.5-3-8.5-3.5L12 6.5M3.5 9.5L1 13l8.5 3.5L12 13M20.5 9.5l2.5 3.5" stroke-width="1.6"/><path d="M16 19h5.5M19.5 17l2 2-2 2" stroke-width="1.6"/></g><g transform="translate(748.00,145.00) scale(1.2500)" fill="none" stroke="#4169ff" stroke-width="2.3" stroke-linecap="round" stroke-linejoin="round"><path d="M12 19H4a2 2 0 0 1-2-2V5a1 1 0 0 1 1-1h5.5l3 3H19a2 2 0 0 1 2 2v3"/><rect x="13.5" y="13" width="9" height="9" rx="1.5" stroke-width="1.6"/><path d="M13.8 20.5l4-3.5 4.5 4M16 15.5h.01" stroke-width="1.4"/></g><g transform="translate(786.00,145.00) scale(1.2500)" fill="none" stroke="#4169ff" stroke-width="2.3" stroke-linecap="round" stroke-linejoin="round"><path d="M17.5 11V2.5H5v19h8"/><path d="M8 6h6.5" stroke-width="2.2"/><path d="M8 10h.01M11.2 10h.01M14.5 10h.01M8 13.5h.01M11.2 13.5h.01M8 17h.01M11.2 17h.01" stroke-width="2.2"/><circle cx="17.5" cy="18" r="4.2" fill="#f2f2f2" stroke-width="1.5"/><path d="M17.5 16v4" stroke-width="1"/></g><g transform="translate(819.00,145.00) scale(1.2500)" fill="none" stroke="#4169ff" stroke-width="2.3" stroke-linecap="round" stroke-linejoin="round"><path d="M2 5h17v12H2z"/><path d="M19 6h2.5v9"/><rect x="4.5" y="7.5" width="4.5" height="4.5" stroke-width="1.8"/><path d="M11 8h6M11 10h6M11 12h6M4.5 14.5h12" stroke-width="1.6"/><circle cx="19" cy="18.5" r="3.8" fill="#f2f2f2" stroke-width="1.5"/><path d="M19 17v3M17.5 18.5h3" stroke-width="1.3"/></g><g transform="translate(866.50,144.50) scale(1.3333)" fill="none" stroke="#4169ff" stroke-width="2.3" stroke-linecap="round" stroke-linejoin="round"><path d="M3 11.5a3 3 0 0 1 3-3h12a3 3 0 0 1 3 3V19a1 1 0 0 1-1 1H4a1 1 0 0 1-1-1z"/><path d="M8.5 8.5V5.5a1 1 0 0 1 1-1h5a1 1 0 0 1 1 1v3"/><path d="M3 14h18M8 12.8v2.5M16 12.8v2.5"/></g><g transform="translate(911.00,144.00) scale(1.3333)" fill="none" stroke="#4169ff" stroke-width="2.3" stroke-linecap="round" stroke-linejoin="round"><path d="M1.5 2H3.5v16.5h19"/><rect x="6.5" y="4" width="12.5" height="11" rx="1"/><path d="M11 4v3l1.2-.8 1.2.8V4" fill="#4169ff"/><circle cx="7.5" cy="20.3" r="1.2" fill="#4169ff"/><circle cx="17.5" cy="20.3" r="1.2" fill="#4169ff"/></g><g transform="translate(965.50,145.00) scale(1.2500)" fill="none" stroke="#4169ff" stroke-width="2.3" stroke-linecap="round" stroke-linejoin="round"><path d="M4 8.5V19.5a1.5 1.5 0 0 0 1.5 1.5h13a1.5 1.5 0 0 0 1.5-1.5V8.5"/><path d="M4 9V7a2 2 0 0 1 2-2h12a2 2 0 0 1 2 2v2z" fill="#4169ff"/><path d="M8 2.5v3M16 2.5v3M12 12.5v6M9 15.5h6"/></g><g transform="translate(1016.00,145.00) scale(1.2500)" fill="none" stroke="#4169ff" stroke-width="2.4" stroke-linecap="round" stroke-linejoin="round"><path d="M2.5 2.5h19v13l-6 6h-13z" stroke-linejoin="miter" stroke-linecap="butt"/><path d="M15.5 21.5v-6h6" stroke-linejoin="miter"/></g><g transform="translate(1187.00,145.00) scale(1.2500)" fill="none" stroke="#4169ff" stroke-width="2.0" stroke-linecap="round" stroke-linejoin="round"><path d="M3.5 16.5a1 1 0 0 1 1-1h15a1 1 0 0 1 1 1v2.5h-17z"/><path d="M3.5 21h17"/><path d="M10 15.5v-3.5c0-1.2-2.3-2.3-2.3-5a4.3 4.3 0 0 1 8.6 0c0 2.7-2.3 3.8-2.3 5v3.5"/></g><g transform="translate(1223.00,145.00) scale(1.2500)" fill="none" stroke="#4169ff" stroke-width="2.3" stroke-linecap="round" stroke-linejoin="round"><path d="M9 7V4a1.5 1.5 0 0 1 1.5-1.5h6l5 5V19.5a1.5 1.5 0 0 1-1.5 1.5H11.5"/><path d="M16.5 2.5v5h5"/><path d="M2.5 21.5l9-9" stroke-width="2.5"/><path d="M2.5 21.5l9-9" stroke="#f2f2f2" stroke-width="1"/><path d="M6 10.5l1 1-1 1-1-1zM11.5 9.5l1 1-1 1-1-1zM11 15l1 1-1 1-1-1z" fill="#4169ff" stroke-width="1"/></g><g transform="translate(1381.50,146.50) scale(1.1250)" fill="none" stroke="#4169ff" stroke-width="2.3" stroke-linecap="round" stroke-linejoin="round"><rect x="4" y="10.5" width="16" height="12" rx="2.5"/><path d="M8 10.5V6.5a4 4 0 0 1 8 0v4"/></g><g transform="translate(1432.20,143.50) scale(1.2917)" fill="none" stroke="#4169ff" stroke-width="2.0" stroke-linecap="round" stroke-linejoin="round"><path d="M7.5 9.5L10.5 3M16.5 9.5L13.5 3"/><path d="M2.5 9.5h19"/><path d="M4 10l2.5 8.5a1.5 1.5 0 0 0 1.5 1h8a1.5 1.5 0 0 0 1.5-1L20 10"/><path d="M9.5 13v3.5M12 13v3.5M14.5 13v3.5"/></g><g transform="translate(842.00,692.00) scale(1.0833)" fill="none" stroke="#4169ff" stroke-width="2.0" stroke-linecap="round" stroke-linejoin="round"><circle cx="10.5" cy="10.5" r="7.5"/><path d="M16 16l5.5 5.5"/></g><g transform="translate(873.50,692.50) scale(1.0417)" fill="none" stroke="#4169ff" stroke-width="2.2" stroke-linecap="round" stroke-linejoin="round"><path d="M8.5 20.5H3V3.5h18v17h-5.5"/><path d="M3 4.7h18" stroke-width="3.2" stroke-linecap="butt"/><path d="M4.8 4.6h.9M7 4.6h.9M9.2 4.6h.9" stroke="#fff" stroke-width="1" stroke-linecap="butt"/><path d="M12 21.8V11.5"/><path d="M9 14.3l3-3 3 3" fill="#4169ff"/></g><g transform="translate(1383.00,795.00) scale(1.0833)" fill="none" stroke="#4169ff" stroke-width="2.4" stroke-linecap="round" stroke-linejoin="round"><circle cx="10.5" cy="10.5" r="7.5"/><path d="M16 16l5.5 5.5"/></g><g transform="translate(1413.50,795.50) scale(1.0417)" fill="none" stroke="#4169ff" stroke-width="2.3" stroke-linecap="round" stroke-linejoin="round"><path d="M8.5 20.5H3V3.5h18v17h-5.5"/><path d="M3 4.7h18" stroke-width="3.2" stroke-linecap="butt"/><path d="M4.8 4.6h.9M7 4.6h.9M9.2 4.6h.9" stroke="#fff" stroke-width="1" stroke-linecap="butt"/><path d="M12 21.8V11.5"/><path d="M9 14.3l3-3 3 3" fill="#4169ff"/></g><g transform="translate(1530.00,310.00) scale(1.1667)" fill="none" stroke="#4169ff" stroke-width="1.8" stroke-linecap="round" stroke-linejoin="round"><path d="M11 19H4a2 2 0 0 1-2-2V5a1.5 1.5 0 0 1 1.5-1.5H8.5l3 3H18a2 2 0 0 1 2 2v3.5"/><rect x="13.5" y="13" width="9" height="9" rx="1.5" stroke-width="1.6"/><path d="M13.8 20.5l4-3.5 4.5 4M16 15.5h.01" stroke-width="1.4"/></g></svg>
</body></html>
